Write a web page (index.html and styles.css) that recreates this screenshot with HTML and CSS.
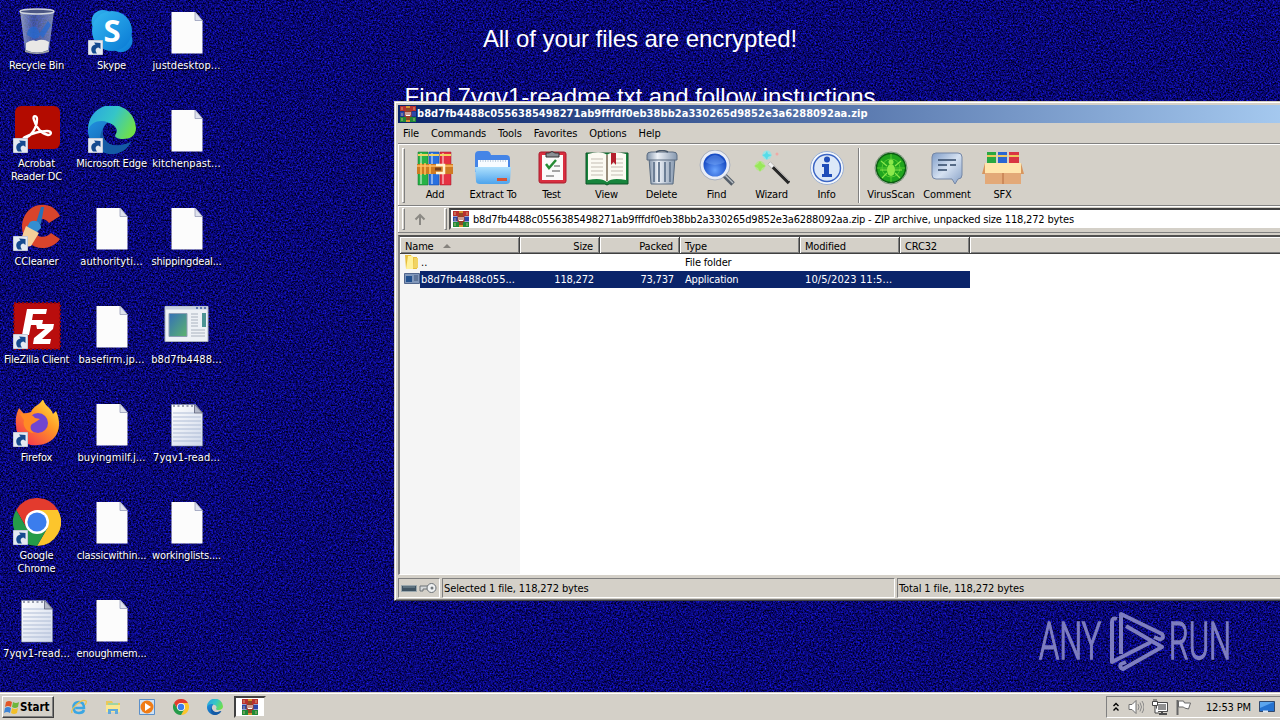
FILE: index.html
```
<!DOCTYPE html>
<html lang="en">
<head>
<meta charset="utf-8">
<title>Desktop</title>
<link rel="stylesheet" href="styles.css">
</head>
<body>
<svg class="defs" width="0" height="0">
  <defs>
    <filter id="grain" x="0" y="0" width="100%" height="100%" color-interpolation-filters="sRGB">
      <feTurbulence type="fractalNoise" baseFrequency="0.6" numOctaves="3" seed="7"/>
      <feColorMatrix values="0.2 0 0 0 -0.065  0.2 0 0 0 -0.07  1.35 0 0 0 -0.225  0 0 0 0 1"/>
    </filter>
    <linearGradient id="gEdge" x1="0" y1="0.2" x2="1" y2="0.6"><stop offset="0" stop-color="#2aa6e0"/><stop offset=".5" stop-color="#35c5c8"/><stop offset="1" stop-color="#6fe04a"/></linearGradient>
    <linearGradient id="gEdge2" x1="0" y1="0" x2="1" y2="1"><stop offset="0" stop-color="#2191df"/><stop offset="1" stop-color="#0b4d9c"/></linearGradient>
    <linearGradient id="gSky" x1="0" y1="0" x2="1" y2="1"><stop offset="0" stop-color="#35b9f1"/><stop offset="1" stop-color="#0878d4"/></linearGradient>
    <linearGradient id="gFire" x1="1" y1="0" x2="0.2" y2="1"><stop offset="0" stop-color="#fff04a"/><stop offset=".45" stop-color="#ff9a26"/><stop offset="1" stop-color="#f5304f"/></linearGradient>
    <linearGradient id="gFolder" x1="0" y1="0" x2="0" y2="1"><stop offset="0" stop-color="#aee0fd"/><stop offset="1" stop-color="#4da3ec"/></linearGradient>
    <linearGradient id="gMetal" x1="0" y1="0" x2="1" y2="0"><stop offset="0" stop-color="#8294aa"/><stop offset=".35" stop-color="#eef2f8"/><stop offset="1" stop-color="#8799b0"/></linearGradient>
    <linearGradient id="gBin" x1="0" y1="0" x2="1" y2="0"><stop offset="0" stop-color="#b5c2d8" stop-opacity=".8"/><stop offset=".4" stop-color="#5f7cba" stop-opacity=".65"/><stop offset="1" stop-color="#98a7c6" stop-opacity=".8"/></linearGradient>
    <linearGradient id="gApp" x1="0" y1="0" x2="1" y2="1"><stop offset="0" stop-color="#3470b8"/><stop offset="1" stop-color="#5cb46c"/></linearGradient>
    <radialGradient id="gLens" cx=".5" cy=".7"><stop offset="0" stop-color="#6aa4ff"/><stop offset="1" stop-color="#174bc4"/></radialGradient>
    <linearGradient id="gCom" x1="0" y1="0" x2="1" y2="1"><stop offset="0" stop-color="#7e9cc8"/><stop offset=".5" stop-color="#d5e1f1"/><stop offset="1" stop-color="#86a0c6"/></linearGradient>
    <linearGradient id="gNote" x1="0" y1="0" x2="1" y2="1"><stop offset="0" stop-color="#fff"/><stop offset="1" stop-color="#cfd8ea"/></linearGradient>

    <symbol id="doc" viewBox="0 0 48 48"><path d="M8.500 4h24l7 8.500v33h-31z" fill="#fcfcfc"/><path d="M32 4v8.500h7.500z" fill="#dfe2ee" stroke="#8a90b0" stroke-width=".7"/></symbol>
    <symbol id="note" viewBox="0 0 48 48"><path d="M8.500 4.500h24l7 8.500v33h-31z" fill="url(#gNote)" stroke="#7b86a8" stroke-width=".6"/><path d="M10 13h22M10 17h28M10 21h28M10 25h28M10 29h28M10 33h28M10 37h28M10 41h28" stroke="#a9b8d2" stroke-width=".9"/><path d="M10 6h22" stroke="#7b8194" stroke-width="1.600" stroke-dasharray="2 2.500"/><path d="M31.500 4.500v8.500h8z" fill="#b4b9c8" stroke="#5b6078" stroke-width=".8"/></symbol>
    <symbol id="link" viewBox="0 0 48 48"><path d="M.5 32.500h14v14h-14z" fill="#e4e9f1" stroke="#c3cad8"/><path d="M5 45.500C2 42 3 37 7.500 36.500L6 34.500l6.500.5v6l-2-1.500C7 40 7 43 9 45.500z" fill="#154a8f"/></symbol>
    <symbol id="edge" viewBox="0 0 48 48"><path d="M0 24A24 24 0 0 1 48 22C48 30 42 33 35 33 29 33 26 31 27.500 28.500 31 24 27 18 19 16.500 11 15 3 20 0 29z" fill="url(#gEdge)"/><path d="M0 24C3 16 12 13 20 16.500 14 20 13 28 17 34 22 41 32 41 43 36 36 47 26 49 19 47.500 8 45 0 36 0 24z" fill="url(#gEdge2)"/><path d="M20 16.500C13 22 13 28 17 34 22 41 32 41 43 36 39 45 29 49 21 48 10 43 9 25 20 16.500z" fill="#145aa5"/></symbol>
    <symbol id="chrome" viewBox="0 0 48 48"><path d="M3.200 12A24 24 0 0 1 44.800 12H24L13.600 30z" fill="#e33b2e"/><path d="M44.800 12A24 24 0 0 1 24 48L34.400 30 24 12z" fill="#fcc52c"/><path d="M24 48A24 24 0 0 1 3.200 12L13.600 30h20.800z" fill="#259b49"/><circle cx="24" cy="24" r="12" fill="#fff"/><circle cx="24" cy="24" r="9.600" fill="#3b7ded"/></symbol>
    <symbol id="rar" viewBox="0 0 16 16"><path d="M0 0h16v5H0z" fill="#b9302f"/><path d="M0 5.500h16v5H0z" fill="#2d47a8"/><path d="M0 11h16v5H0z" fill="#1f8a37"/><path d="M6 0h4v16H6z" fill="#8f4a28"/><path d="M6 0h4v2H6zM6 14h4v2H6z" fill="#d8952f"/><path d="M4.500 5h7v6h-7z" fill="#9c3a24"/><path d="M6 6v3.500h4V6M8 6v3" fill="none" stroke="#fff"/><path d="M2 1v3M2 7v3M2 12v3M14 1v3M14 12v3" stroke="#dfc58a" stroke-width=".8"/></symbol>
    <symbol id="books" viewBox="0 0 36 36"><g stroke-width=".5"><path d="M1 2h10v33H1z" fill="#27b347" stroke="#126d27"/><path d="M12 2h10v33H12z" fill="#2970df" stroke="#174499"/><path d="M23 2h11v33H23z" fill="#e63243" stroke="#9a1a2b"/></g><path d="M3 3h2v31H3zM14 3h2v31h-2zM25 3h2v31h-2z" fill="#fff" opacity=".45"/><path d="M1 5h10M12 5h10M23 5h11" stroke="#f2d35f" stroke-width="2"/><path d="M0 14h36v10H0z" fill="#cf7a22"/><path d="M0 16h36" stroke="#f3ab55" stroke-width="2"/><path d="M4 13v12M8 13v12M13 14v10" stroke="#ffc45d" stroke-width="1.500"/><path d="M19 15h8v8h-8" fill="none" stroke="#fff2cf" stroke-width="2.500"/><path d="M18 19h6" stroke="#79401b" stroke-width="3"/></symbol>
  </defs>
</svg>

<main class="desktop">
  <svg class="grain" width="1280" height="720"><rect width="1280" height="720" filter="url(#grain)"/></svg>
  <div class="wallpaper-text"><p>All of your files are encrypted!</p><p>Find 7yqv1-readme.txt and follow instuctions</p></div>

  <section class="icons">
    <div class="icon"><svg viewBox="0 0 48 48"><path d="M7 3l5 39q11 6 24 0l5-39z" fill="url(#gBin)"/><path d="M13 35q6-4 10-2 7-3 13 1l-1 8q-11 5-22 0z" fill="#e9e8e6"/><path d="M14 27c0-8 9-13 12-3 3 5-4 9-8 5zM35 13l3 4-8 13-4-4z" fill="#246ad0" opacity=".75"/><ellipse cx="24" cy="3.500" rx="17" ry="2.500" fill="#4b5683" stroke="#cfd4dc" stroke-width="1.500"/><path d="M12 42q12 5 24 0v2q-12 4-24 0z" fill="#a1a6a6"/></svg><span>Recycle Bin</span></div>
    <div class="icon"><svg viewBox="0 0 48 48"><g fill="url(#gSky)"><circle cx="15" cy="13.500" r="11.500"/><circle cx="33" cy="32.500" r="11.500"/><circle cx="24" cy="23" r="20"/></g><text class="skype-s" x="24" y="34">S</text><use href="#link"/></svg><span>Skype</span></div>
    <div class="icon"><svg><use href="#doc"/></svg><span class="loose">justdesktop...</span></div>

    <div class="icon"><svg viewBox="0 0 48 48"><rect x="2" y="0" width="45" height="43" rx="6" fill="#b30b00"/><path d="M11 32c7-1 13-10 13-19 0-4-5-4-3 1 2 8 8 14 14 15 4 0 4-4-1-4-9 0-16 3-22 6-3 2-2 4 1 1z" fill="none" stroke="#fff" stroke-width="2.400"/><use href="#link"/></svg><span>Acrobat<br>Reader DC</span></div>
    <div class="icon"><svg><use href="#edge"/><use href="#link"/></svg><span>Microsoft Edge</span></div>
    <div class="icon"><svg><use href="#doc"/></svg><span class="loose">kitchenpast...</span></div>

    <div class="icon"><svg viewBox="0 0 48 48"><path d="M47 12 36 19c-6-8-15-3-14 7 1 8 10 9 16 3l9 6C39 46 24 47 15 38 5 28 8 10 20 3c10-5 22-2 27 9z" fill="#d9442b"/><path d="M28 3h3l-3 17-5-1z" fill="#2673ba"/><path d="M17 18c5-3 11 0 11 6l-5 5-9-6z" fill="#348ed1"/><path d="M13 22l13 7-8 13-5 1H3l5-8z" fill="#f4cf99"/><use href="#link"/></svg><span>CCleaner</span></div>
    <div class="icon"><svg><use href="#doc"/></svg><span class="loose">authorityti...</span></div>
    <div class="icon"><svg><use href="#doc"/></svg><span>shippingdeal...</span></div>

    <div class="icon"><svg viewBox="0 0 48 48"><rect x="1" y="1" width="46" height="46" fill="#b90d0d" stroke="#8c0610" stroke-width="2" stroke-dasharray="2 2"/><path d="M9 33 14 7h20l-1 5H20l-1 6h11l-1 5H18l-2 10z" fill="#fff"/><path d="M23 22h18l-1 5-11 10h9l-1 5H20l1-6 11-9h-8z" fill="#fff"/><use href="#link"/></svg><span class="snug">FileZilla Client</span></div>
    <div class="icon"><svg><use href="#doc"/></svg><span class="loose">basefirm.jp...</span></div>
    <div class="icon"><svg viewBox="0 0 48 48"><path d="M2 4.500h43v35H2z" fill="#edf1f5" stroke="#a9b2bd"/><path d="M2 4.500h43v3H2z" fill="#c7d0df"/><path d="M33 6h2M37 6h2M41 6h2" stroke="#3758a0" stroke-width="1.500"/><path d="M6 11.500h18v23H6z" fill="url(#gApp)" stroke="#8b9db3"/><path d="M28 12h7M28 15h7M28 18h7M28 21h7M28 24h7M28 28h14M28 31h14M28 34h14" stroke="#a9b2be"/><path d="M39 11h4v14h-4z" fill="#4c9493"/></svg><span class="loose">b8d7fb4488...</span></div>

    <div class="icon"><svg viewBox="0 0 48 48"><path d="M3 25C2 18 4 12 6 8l5 6 7-2C21 5 26 6 30-1c2 8 8 8 10 15l3-3c8 17 0 33-18 34C13 47 3 38 3 25z" fill="url(#gFire)"/><circle cx="25" cy="23" r="10" fill="#7145d1"/><path d="M7 14c6-2 12 0 15 4l5 1-6 4c-5 1-4 8 0 10-7 0-12-7-10-13z" fill="#ff8a25"/><use href="#link"/></svg><span>Firefox</span></div>
    <div class="icon"><svg><use href="#doc"/></svg><span class="loose">buyingmilf.j...</span></div>
    <div class="icon"><svg><use href="#note"/></svg><span class="loose">7yqv1-read...</span></div>

    <div class="icon"><svg><use href="#chrome"/><use href="#link"/></svg><span>Google<br>Chrome</span></div>
    <div class="icon"><svg><use href="#doc"/></svg><span>classicwithin...</span></div>
    <div class="icon"><svg><use href="#doc"/></svg><span>workinglists....</span></div>

    <div class="icon"><svg><use href="#note"/></svg><span class="loose">7yqv1-read...</span></div>
    <div class="icon"><svg><use href="#doc"/></svg><span>enoughmem...</span></div>
  </section>

  <section class="window">
    <header class="title"><svg><use href="#rar"/></svg><b>b8d7fb4488c0556385498271ab9fffdf0eb38bb2a330265d9852e3a6288092aa.zip</b></header>
    <nav class="menu"><span>File</span><span>Commands</span><span>Tools</span><span>Favorites</span><span>Options</span><span>Help</span></nav>
    <div class="toolbar">
      <i class="grip"></i>
      <div class="tool add"><svg><use href="#books"/></svg><span>Add</span></div>
      <div class="tool wide"><svg viewBox="0 0 36 36"><path d="M0 5q0-4 4-4h8q3 0 4 4h15q4 0 4 4v13H0z" fill="#4585e7"/><path d="M3 10h30v10H3z" fill="#f7fbff"/><path d="M5 11h26" stroke="#8ea7c3" stroke-dasharray="1 1.500"/><path d="M0 17h36l-1 14q0 3-4 3H5q-4 0-4-3z" fill="url(#gFolder)"/><path d="M22 28h10v3H22z" fill="#d65335"/></svg><span>Extract To</span></div>
      <div class="tool"><svg viewBox="0 0 36 36"><rect x="5" y="2" width="27" height="31" rx="2" fill="#d92f40" stroke="#a91c2c"/><path d="M8 5h21v25H8z" fill="#fafafa"/><path d="M12 3h3q3-3 6 0h4v4H12z" fill="#8a8f95" stroke="#333"/><path d="m12 14 3 4 7-8" fill="none" stroke="#278b35" stroke-width="2.500"/><path d="M20 16h6M18 21h8M12 26h8" stroke="#888" stroke-width="1.500"/></svg><span>Test</span></div>
      <div class="tool"><svg class="book" viewBox="0 0 44 36"><path d="M1 3h42v31H24l-2 1-2-1H1z" fill="#17843c" stroke="#0d5427"/><path d="M3 4q13-4 19 1 6-5 19-1v26q-14-3-19 2-6-5-19-2z" fill="#fbfaf2"/><path d="M22 5v26" stroke="#988d7b" stroke-width="2"/><path d="M6 9h12M6 13h12M6 17h12M6 21h12M6 25h12M26 9h12M26 13h12M26 17h12M26 21h12M26 25h12" stroke="#c3bdb2"/><path d="M26 3h5v12l-2.500-3-2.500 3z" fill="#b41f2d"/></svg><span>View</span></div>
      <div class="tool"><svg viewBox="0 0 36 36"><path d="M5 8h26l-2 26H7z" fill="url(#gMetal)" stroke="#596b80"/><path d="M10 12v20M15 12v20M21 12v20M26 12v20" stroke="#6d7f96" stroke-width="2"/><path d="M3 5q0-3 4-3h22q4 0 4 3v5H3z" fill="url(#gMetal)" stroke="#5d6d81"/><path d="M12 2q6-3 12 0" fill="none" stroke="#465568" stroke-width="1.500"/></svg><span>Delete</span></div>
      <div class="tool"><svg viewBox="0 0 36 36"><path d="m25 25 9 9" stroke="#555e69" stroke-width="5"/><path d="m26 25 8 8" stroke="#bac0c6" stroke-width="1.500"/><circle cx="16" cy="15" r="13" fill="url(#gLens)" stroke="#e9edf6" stroke-width="3"/><circle cx="16" cy="15" r="15" fill="none" stroke="#8b9ab7" stroke-width=".6"/><path d="M6 12q10-14 20 0-10 6-20 0z" fill="#8bb9ff" opacity=".35"/></svg><span>Find</span></div>
      <div class="tool"><svg viewBox="0 0 36 36"><path d="m15 13 20 20" stroke="#272727" stroke-width="3.500"/><path d="m15 13 4 4" stroke="#f0f0f0" stroke-width="3.500"/><path d="m20 16 15 15" stroke="#aaa"/><circle cx="6" cy="16" r="5" fill="#a9ed73" opacity=".7"/><circle cx="13" cy="5" r="4.500" fill="#82e9f1" opacity=".7"/><path d="m6 11 2 3 4 2-4 2-2 4-2-4-4-2 4-2z" fill="#98e858"/><path d="m13 1 1 3 4 1-4 2-1 3-2-3-3-2 3-1z" fill="#55dde9"/><circle cx="23" cy="4" r="1.500" fill="#efa9a4"/></svg><span>Wizard</span></div>
      <div class="tool"><svg viewBox="0 0 36 36"><circle cx="18" cy="18" r="16.500" fill="#f4f8fd" stroke="#9bb0d3"/><circle cx="18" cy="18" r="13.500" fill="#dce8f8" stroke="#3c66c4" stroke-width="1.500"/><circle cx="18" cy="9.500" r="3" fill="#204db8"/><path d="M13 14h7v10h3v3H13v-3h2v-7h-2z" fill="#204db8"/></svg><span>Info</span></div>
      <i class="sep"></i>
      <div class="tool virus"><svg viewBox="0 0 36 36"><circle cx="18" cy="18" r="16" fill="#e7f6e7" stroke="#778d77"/><circle cx="18" cy="18" r="14.500" fill="#20a51e" stroke="#0c5c12" stroke-width="1.500"/><circle cx="18" cy="18" r="9" fill="none" stroke="#55cb30"/><path d="M18 4v28M4 18h28" stroke="#55cb30"/><ellipse cx="18" cy="20" rx="4" ry="6" fill="#8be84a"/><circle cx="18" cy="12" r="2.500" fill="#8be84a"/><path d="m8 11 6 5m-7 4h7m-5 8 5-5m14-12-6 5m7 4h-7m5 8-5-5" stroke="#8be84a" stroke-width="1.200"/></svg><span>VirusScan</span></div>
      <div class="tool virus"><svg viewBox="0 0 36 36"><path d="M7 3h22q4 0 4 4v18q0 4-4 4l-3 5-3-5H7q-4 0-4-4V7q0-4 4-4z" fill="url(#gCom)" stroke="#7587a6"/><path d="M9 10h18M9 15h9m3 0h6M9 20h9" stroke="#304766" stroke-width="1.700"/></svg><span>Comment</span></div>
      <div class="tool"><svg class="box" viewBox="0 0 42 36"><path d="M5 2h9v14H5z" fill="#29a842"/><path d="M16 2h9v14h-9z" fill="#2966d2"/><path d="M27 2h10v14H27z" fill="#d93642"/><path d="M5 6h9m2 0h9m2 0h10" stroke="#edc85c" stroke-width="2"/><path d="M3 14h36v20H3z" fill="#e3a978"/><path d="M21 22v12" stroke="#b66b3d"/><path d="M3 13h36l1 10H2z" fill="#ffe5ad"/><path d="M3 13 0 24h3m36-11 3 11h-3" fill="#d8965e"/></svg><span>SFX</span></div>
    </div>
    <div class="address">
      <i class="grip"></i>
      <svg class="up" viewBox="0 0 12 12"><path d="M6 12V2M1.500 6.500 6 2l4.500 4.500" fill="none" stroke="#8b8984" stroke-width="2"/></svg>
      <i class="grip"></i>
      <div class="path"><svg><use href="#rar"/></svg><span>b8d7fb4488c0556385498271ab9fffdf0eb38bb2a330265d9852e3a6288092aa.zip - ZIP archive, unpacked size 118,272 bytes</span></div>
    </div>
    <div class="list">
      <div class="row head"><span>Name<i class="sort"></i></span><span class="num">Size</span><span class="num">Packed</span><span>Type</span><span>Modified</span><span>CRC32</span><span></span></div>
      <div class="row"><span class="name"><svg viewBox="0 0 16 16"><path d="M1 1h6l1 2h5v12H2z" fill="#e8bf3c"/><path d="M4 2h5v13H2z" fill="#fff19a"/><path d="M10 4h4v10H9z" fill="#f1d363"/></svg><em>..</em></span><span></span><span></span><span>File folder</span></div>
      <div class="row picked"><span class="name"><svg viewBox="0 0 16 16"><path d="M.5 2.500h15v10H.5z" fill="#8198bb" stroke="#52668c"/><path d="M2 5h6v6H2z" fill="#23518e"/><path d="M10 5h4M10 7h4M10 9h4" stroke="#3c5277"/></svg><em>b8d7fb4488c055...</em></span><span class="num">118,272</span><span class="num">73,737</span><span>Application</span><span class="date">10/5/2023 11:5...</span><span></span></div>
    </div>
    <footer class="status">
      <div class="cell keys"><svg viewBox="0 0 36 12"><path d="M.5 3.500h15v6H.5z" fill="#3f5362" stroke="#9aa7ad"/><path d="M2 5h12" stroke="#7f939d"/><path d="M19 4h8v3h-5v2h-3z" fill="#d5d8da" stroke="#6c7277"/><circle cx="30.500" cy="6" r="4.500" fill="#eef0f1" stroke="#6b7176"/><circle cx="31" cy="6" r="1.500" fill="#70767a"/></svg></div>
      <div class="cell sel">Selected 1 file, 118,272 bytes</div>
      <div class="cell total">Total 1 file, 118,272 bytes</div>
    </footer>
  </section>

  <svg class="anyrun" viewBox="0 0 200 64">
    <text x="0" y="50.500" textLength="62" lengthAdjust="spacingAndGlyphs">ANY</text>
    <text x="130" y="50.500" textLength="62" lengthAdjust="spacingAndGlyphs">RUN</text>
    <g fill="none" stroke="#9292cd" stroke-width="4" stroke-linejoin="round" opacity=".85"><path d="M82 46V6l41 20q3 4-2 5.500l-6-2.500"/><path d="m87 18 36 21-39 22q-4-1-2-5l5-2"/><path d="M78 11q-5-2-5 3v40l39-20"/></g>
  </svg>

  <footer class="taskbar">
    <button class="start"><svg viewBox="0 0 16 16"><path d="M2 3q3-2 6 0L7 8Q4 6 1 8z" fill="#e25728"/><path d="M9 3q3 2 6 0l-1 5q-3 2-6 0z" fill="#6db63a"/><path d="M1 9q3-2 6 0l-1 5q-3-2-6 0z" fill="#3d84d6"/><path d="M8 9q3 2 6 0l-1 5q-3 2-6 0z" fill="#f2bf28"/></svg><b>Start</b></button>
    <div class="quick">
      <svg viewBox="0 0 16 16"><path d="M4.200 9H13q0-6-5-6-5.500 0-5.500 5.500T8 14q4 0 5-3" fill="none" stroke="#3aa6e3" stroke-width="2.500"/><path d="M1 14C-1 10 11-1 15 2q1 1-1 4" fill="none" stroke="#ecc34c" stroke-width="1.300"/></svg>
      <svg viewBox="0 0 16 16"><path d="M1 2h6l1 2h7v9H1z" fill="#e9c85a"/><path d="M3 4h10v5H3z" fill="#9fd4a4"/><path d="M1 6h14v7H1z" fill="#fae792"/><path d="M3 15v-5h10v5h-3v-3H6v3z" fill="#62aada"/></svg>
      <svg viewBox="0 0 16 16"><path d="M.5.5h15v15H.5z" fill="#cfe2f5" stroke="#5b8fc9"/><circle cx="8" cy="8" r="6.500" fill="#f07c16"/><path d="m6 4 6 4-6 4z" fill="#fff"/></svg>
      <svg><use href="#chrome"/></svg>
      <svg><use href="#edge"/></svg>
    </div>
    <div class="active"><svg><use href="#rar"/></svg></div>
    <div class="tray">
      <svg class="chev" viewBox="0 0 8 10"><path d="m1.500 4 2.500-2.500L6.500 4M1.500 8.500 4 6l2.500 2.500" fill="none" stroke="#000" stroke-width="1.400"/></svg>
      <svg viewBox="0 0 16 16"><path d="M1 5.500h3l4-4v13l-4-4H1z" fill="#fff" stroke="#707070"/><path d="M10 5q2 3 0 6M12 3.500q3 4.500 0 9M14 2q4 6 0 12" fill="none" stroke="#888"/></svg>
      <svg viewBox="0 0 16 16"><path d="M4.500 3.500h11v9h-11z" fill="#c9c9c9" stroke="#4c4c4c"/><path d="M5.500 4.500h9v7h-9z" fill="#909090" stroke="#fff"/><path d="M7 15h8M10 12v3" stroke="#4c4c4c" stroke-width="2"/><path d="M.5 2.500h5v4h-5zM2 0v2m2-2v2M3 7v7h4" fill="#fff" stroke="#444"/></svg>
      <svg viewBox="0 0 16 16"><path d="M1.500 1v15" stroke="#666" stroke-width="2"/><path d="M2.500 2h5l1 2h6l-2 6-4-1-1-1h-5z" fill="#fff" stroke="#666"/></svg>
      <span class="clock">12:53 PM</span>
      <svg viewBox="0 0 16 16"><path d="M.5 2.500h15v10H.5z" fill="#2472d0" stroke="#30486c"/><path d="M1 3h14L1 9z" fill="#5ba5ee"/><path d="M4 12.500h5" stroke="#dce7f3" stroke-width="2"/></svg>
    </div>
  </footer>
</main>
</body>
</html>
```
FILE: styles.css
```
* { box-sizing: border-box; }
body { margin: 0; overflow: hidden; font: 11px/13px "DejaVu Sans Condensed", "DejaVu Sans", sans-serif; font-stretch: condensed; letter-spacing: -0.17px; color: #000; }
.defs { position: absolute; }
svg { display: block; flex: none; }
.desktop { position: relative; width: 1280px; height: 720px; overflow: hidden; background: #08086a; display: flex; flex-direction: column; }
.grain { position: absolute; left: 0; top: 0; }

.wallpaper-text { position: absolute; left: 0; top: 24px; width: 1280px; height: 77px; overflow: hidden; text-align: center; color: #fff; font: 24px/29px "Liberation Sans", sans-serif; letter-spacing: -0.06px; }
.wallpaper-text p { margin: 0 0 29px; }

.icons { position: relative; display: grid; grid-template-columns: repeat(3, 75px); grid-auto-rows: 98px; padding-top: 8px; margin-left: -1px; flex: 1; min-height: 0; }
.icon { display: flex; flex-direction: column; align-items: center; gap: 3px; color: #fff; text-align: center; white-space: nowrap; text-shadow: 1px 1px 1px #000; }
.icon svg { width: 48px; height: 48px; }
.snug { letter-spacing: -0.27px; }
.loose { letter-spacing: 0.08px; }
.skype-s { font: bold 31px "Open Sans", sans-serif; letter-spacing: 0; fill: #fff; text-anchor: middle; text-shadow: none; }

.window { position: absolute; left: 394px; top: 101px; width: 900px; height: 500px; padding: 3px 4px 2px 3px; background: #d4d0c8; border: 1px solid #d4d0c8; border-bottom-color: #404040; box-shadow: inset 1px 1px #fff, inset 0 -1px #808080; display: flex; flex-direction: column; }
.title { height: 18px; display: flex; align-items: center; gap: 1px; padding-left: 2px; background: linear-gradient(90deg, #0a246a, #a6caf0); color: #fff; white-space: nowrap; letter-spacing: 0.05px; }
.title svg { width: 16px; height: 16px; }
.menu { height: 20px; display: flex; align-items: center; gap: 12px; padding: 2px 0 0 5px; letter-spacing: -0.12px; }
.toolbar { height: 62px; border-top: 1px solid #808080; box-shadow: inset 1px 1px #fff, 0 1px #808080; display: flex; padding: 4px 0 2px 4px; }
.grip { width: 3px; border: 1px solid; border-color: #fff #808080 #808080 #fff; flex: none; }
.tool { width: 55px; display: flex; flex-direction: column; align-items: center; padding-top: 2px; gap: 2px; }
.tool svg { width: 36px; height: 36px; }
.tool svg.book { width: 44px; }
.tool svg.box { width: 42px; }
.add { width: 54px; margin-left: 3px; }
.wide { width: 62px; }
.virus { width: 56px; }
.sep { width: 2px; margin: 0 3px 0 4px; border-left: 1px solid #808080; border-right: 1px solid #fff; }
.address { height: 27px; margin-top: 1px; padding: 2px 0 2px 4px; display: flex; align-items: stretch; border-bottom: 1px solid #808080; box-shadow: inset 1px 1px #fff; }
.up { width: 12px; height: 12px; margin: 5px 18px 0 9px; }
.address .grip + .path { margin-left: 2px; }
.path { flex: 1; height: 22px; display: flex; align-items: center; gap: 4px; padding-left: 2px; background: #fff; border: 2px solid #404040; border-color: #404040 #fff #d4d0c8 #505050; white-space: nowrap; }
.path svg { width: 16px; height: 16px; }
.path span { padding-top: 2px; }

.list { height: 342px; margin-top: 2px; border: 2px solid #808080; border-top-color: #505050; border-bottom: 1px solid #fff; background: linear-gradient(90deg, #f5f5f5 120px, #fff 120px); }
.row { display: grid; grid-template-columns: 120px 80px 80px 120px 100px 70px 1fr; height: 17px; align-items: center; white-space: nowrap; }
.row span { padding: 0 6px 0 5px; }
.row .num { text-align: right; }
.head span { height: 17px; padding-top: 3px; background: #d4d0c8; border-right: 1px solid #404040; border-bottom: 1px solid #404040; box-shadow: inset 1px 1px #fff, inset -1px -1px #808080; }
.sort { display: inline-block; border: 4px solid transparent; border-top: 0; border-bottom-color: #85827d; margin: 0 0 2px 9px; }
.row .name { display: flex; gap: 1px; padding: 0 0 0 4px; height: 17px; }
.name svg { width: 16px; height: 16px; }
.name em { font-style: normal; line-height: 18px; flex: 1; letter-spacing: 0; }
.row .date { letter-spacing: 0.1px; }
.picked { width: 570px; grid-template-columns: 120px 80px 80px 120px 100px 70px; color: #fff; background: linear-gradient(90deg, #f5f5f5 20px, #0a246a 20px); }

.status { height: 20px; margin-top: 3px; display: flex; gap: 2px; letter-spacing: -0.12px; }
.cell { border: 1px solid; border-color: #808080 #fff #fff #808080; padding: 3px 1px; }
.keys { width: 42px; padding: 3px 2px; }
.keys svg { width: 36px; height: 12px; }
.sel { width: 453px; }
.total { flex: 1; }

.anyrun { position: absolute; left: 1039px; top: 608px; width: 200px; height: 64px; overflow: visible; }
.anyrun text { font: 300 52px Roboto, sans-serif; letter-spacing: 0; fill: #9292cd; stroke: #9292cd; stroke-width: 1.6px; opacity: .85; }

.taskbar { position: relative; height: 28px; flex: none; background: #d4d0c8; box-shadow: inset 0 1px #d4d0c8, inset 0 2px #fff; display: flex; padding: 4px 0 2px 2px; }
.start { width: 52px; height: 22px; padding: 0 1px; display: flex; align-items: center; gap: 0; font: inherit; letter-spacing: 0; color: #000; background: #d4d0c8; border: 1px solid; border-color: #fff #404040 #404040 #fff; box-shadow: inset -1px -1px #808080; }
.start svg { width: 16px; height: 16px; }
.start b { font-size: 11.500px; }
.quick { display: flex; gap: 18px; padding: 3px 11px 0 17px; }
.quick svg { width: 16px; height: 16px; }
.active { width: 32px; height: 22px; display: flex; align-items: center; justify-content: center; background: #fff; border: 2px solid; border-color: #404040 #d4d0c8 #d4d0c8 #404040; }
.active svg { width: 16px; height: 16px; }
.tray { margin-left: auto; width: 174px; display: flex; align-items: center; gap: 8px; padding-left: 5px; border-left: 1px solid #808080; border-top: 1px solid #808080; border-bottom: 1px solid #fff; }
.tray svg { width: 16px; height: 16px; }
.tray .chev { width: 8px; height: 10px; }
.clock { margin-left: 6px; white-space: nowrap; }
```
